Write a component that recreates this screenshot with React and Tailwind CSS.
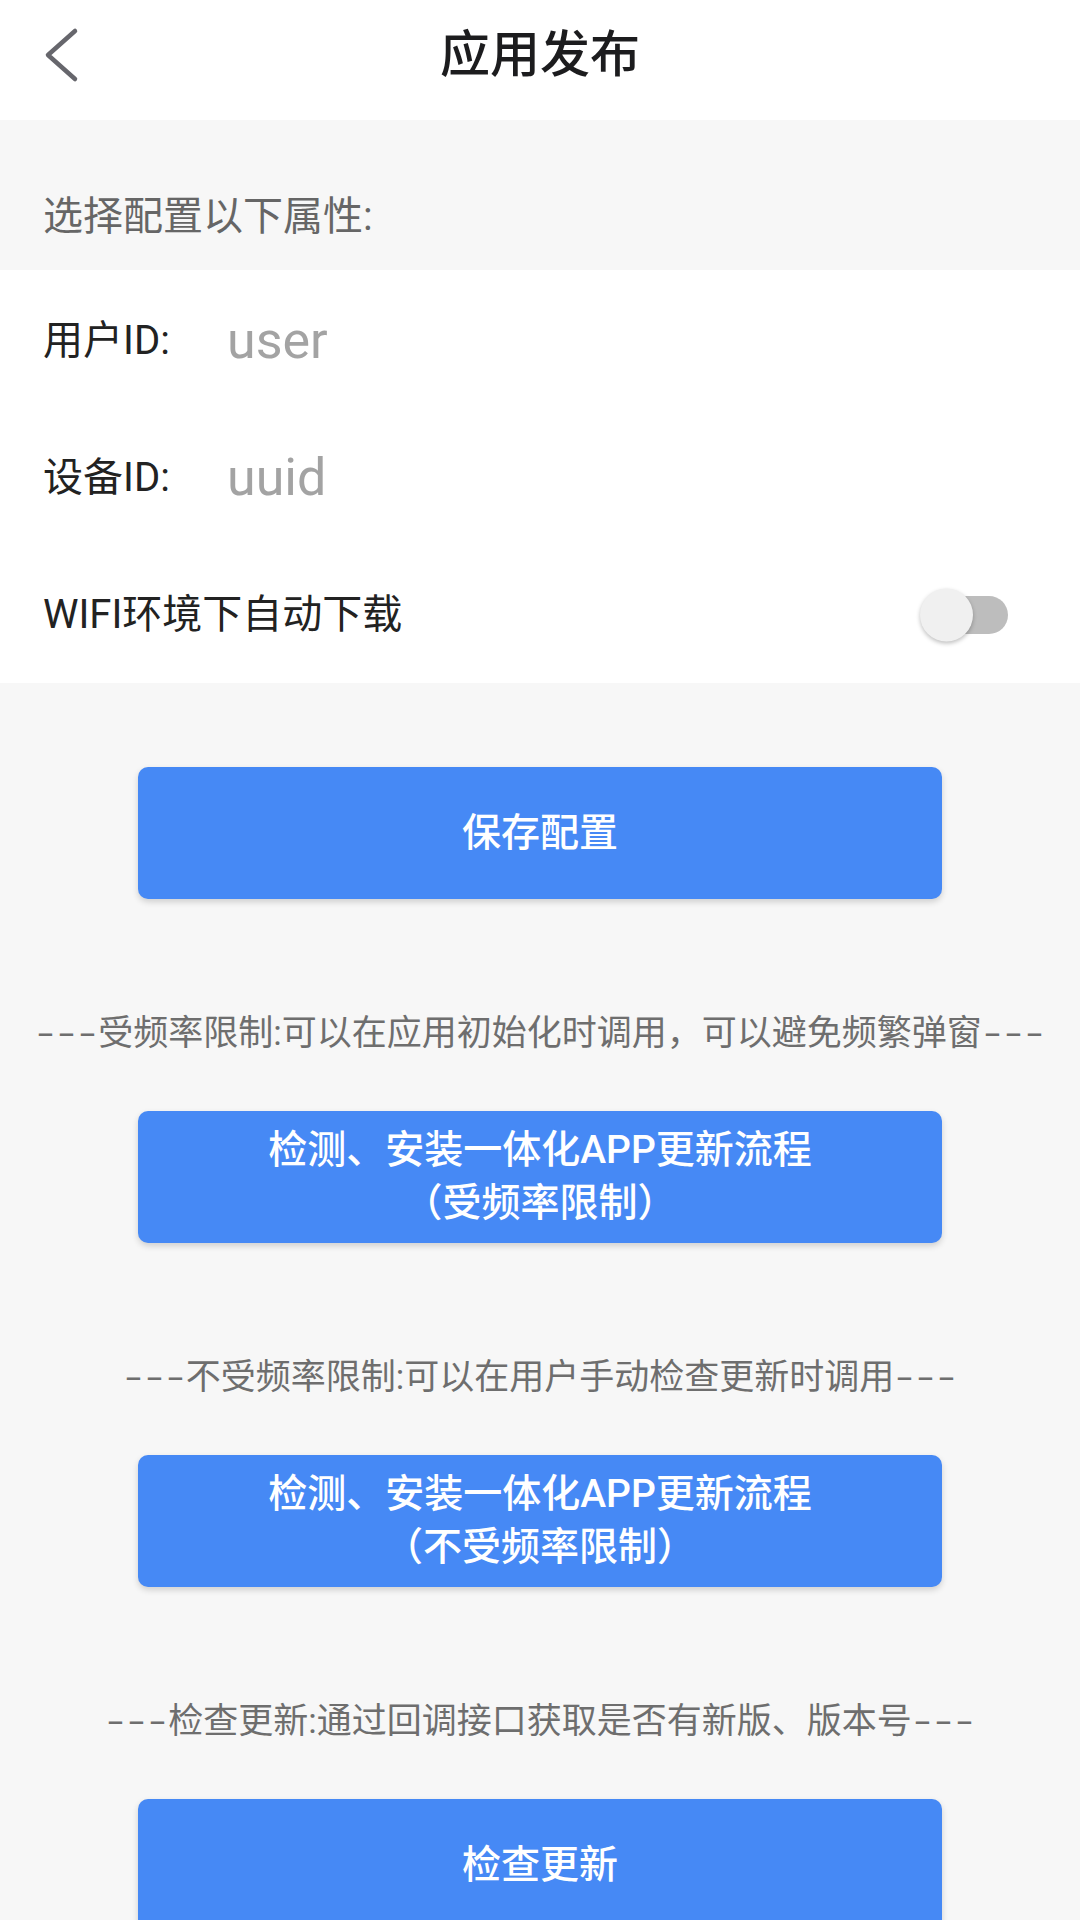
import React from "react";

function Caption({ children }) {
  return (
    <div className="mt-[115px] h-[40px] flex items-center justify-center whitespace-nowrap text-[35px] leading-[40px] text-[#6e6e6e]">
      {children}
    </div>
  );
}

function Dashes() {
  return (
    <span className="inline-flex">
      <span className="inline-block w-[21px] text-center scale-x-[1.6]">-</span>
      <span className="inline-block w-[21px] text-center scale-x-[1.6]">-</span>
      <span className="inline-block w-[21px] text-center scale-x-[1.6]">-</span>
    </span>
  );
}

function BlueButton({ children, first }) {
  return (
    <div
      className={
        (first ? "mt-[84px] " : "mt-[57px] ") +
        "mx-[138px] h-[132px] rounded-[10px] bg-[#4689f5] shadow-[0_3px_6px_rgba(0,0,0,0.16)] flex flex-col items-center justify-center text-white text-[39px] leading-[53px] font-medium"
      }
    >
      {children}
    </div>
  );
}

export default function App() {
  return (
    <div className="w-[1080px] h-[1920px] overflow-hidden bg-[#f7f7f7] font-['Roboto','Noto_Sans_CJK_SC',sans-serif]">
      {/* Header */}
      <div className="h-[120px] bg-white grid grid-cols-[140px_1fr_140px] items-center pb-[10px]">
        <div className="pl-[42px] flex items-center">
          <svg width="40" height="56" viewBox="0 0 40 56" fill="none">
            <polyline
              points="33,4 6,28 33,52"
              stroke="#66666c"
              strokeWidth="4.5"
              strokeLinecap="round"
              strokeLinejoin="round"
            />
          </svg>
        </div>
        <div className="text-center text-[50px] leading-[60px] text-[#1c1c1e] font-medium">
          应用发布
        </div>
        <div />
      </div>

      {/* Section label */}
      <div className="h-[150px] pt-[77px] pl-[43px] text-[40px] leading-[40px] text-[#666666]">
        选择配置以下属性:
      </div>

      {/* Form */}
      <div className="bg-white pt-[2px]">
        <div className="h-[137px] flex items-center pl-[43px]">
          <div className="w-[184px] text-[40px] text-[#222222]">用户ID:</div>
          <div className="text-[52px] text-[#a3a3a3]">user</div>
        </div>
        <div className="h-[137px] flex items-center pl-[43px]">
          <div className="w-[184px] text-[40px] text-[#222222]">设备ID:</div>
          <div className="text-[52px] text-[#a3a3a3]">uuid</div>
        </div>
        <div className="h-[137px] flex items-center justify-between pl-[43px] pr-[72px]">
          <div className="text-[40px] text-[#222222]">WIFI环境下自动下载</div>
          <div className="relative w-[73px] h-[38px] rounded-full bg-[#bdbdbd]">
            <div className="absolute left-[-15px] top-1/2 -translate-y-1/2 w-[53px] h-[53px] rounded-full bg-[#f0f0f0] shadow-[0_2px_4px_rgba(0,0,0,0.25)]" />
          </div>
        </div>
      </div>

      {/* Buttons */}
      <BlueButton first>保存配置</BlueButton>

      <Caption>
        <Dashes />
        受频率限制:可以在应用初始化时调用，可以避免频繁弹窗
        <Dashes />
      </Caption>

      <BlueButton>
        <div>检测、安装一体化APP更新流程</div>
        <div>（受频率限制）</div>
      </BlueButton>

      <Caption>
        <Dashes />
        不受频率限制:可以在用户手动检查更新时调用
        <Dashes />
      </Caption>

      <BlueButton>
        <div>检测、安装一体化APP更新流程</div>
        <div>（不受频率限制）</div>
      </BlueButton>

      <Caption>
        <Dashes />
        检查更新:通过回调接口获取是否有新版、版本号
        <Dashes />
      </Caption>

      <BlueButton>检查更新</BlueButton>
    </div>
  );
}
